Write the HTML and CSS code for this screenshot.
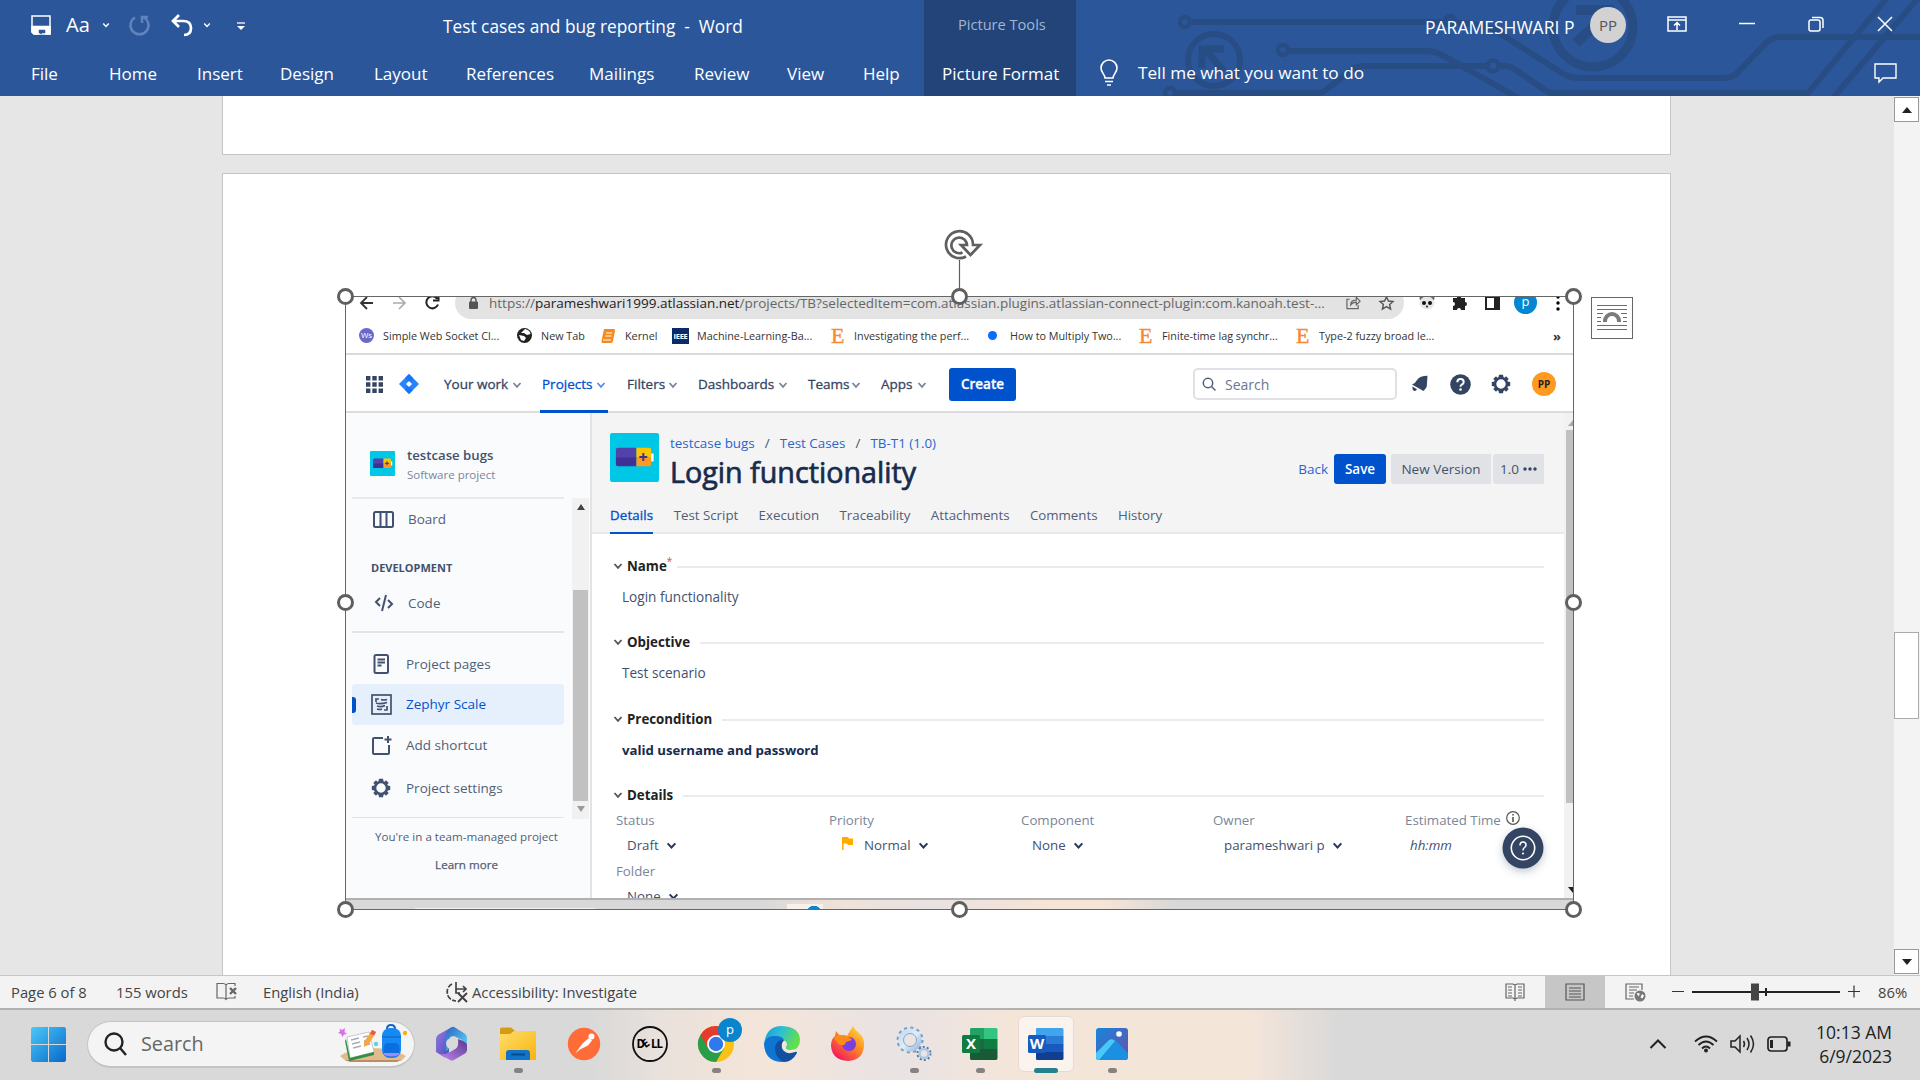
FILE: index.html
```html
<!DOCTYPE html>
<html lang="en">
<head>
<meta charset="utf-8">
<title>Test cases and bug reporting - Word</title>
<link rel="stylesheet" href="styles.css">
</head>
<body>
<svg class="defs" width="0" height="0">
  <defs>
    <linearGradient id="gWin" x1="0" y1="0" x2="1" y2="1"><stop offset="0" stop-color="#4cc8f8"/><stop offset="1" stop-color="#0669cc"/></linearGradient>
    <linearGradient id="gFold" x1="0" y1="0" x2="1" y2="1"><stop offset="0" stop-color="#ffdd6b"/><stop offset="1" stop-color="#f8b40c"/></linearGradient>
    <linearGradient id="gM1" x1="0" y1="0" x2="1" y2="1"><stop offset="0" stop-color="#8f7fe0"/><stop offset=".6" stop-color="#6a5cc8"/><stop offset="1" stop-color="#2c55b8"/></linearGradient>
    <linearGradient id="gM2" x1="0" y1="1" x2="1" y2="0"><stop offset="0" stop-color="#c08af0"/><stop offset="1" stop-color="#5b3690"/></linearGradient>
    <linearGradient id="gM3" x1="0" y1="0" x2="1" y2="1"><stop offset="0" stop-color="#2c62c4"/><stop offset="1" stop-color="#5fe0fa"/></linearGradient>
    <linearGradient id="gEdge" x1="0" y1="0" x2="1" y2=".4"><stop offset="0" stop-color="#1b96de"/><stop offset=".5" stop-color="#2fc0d0"/><stop offset="1" stop-color="#62e04c"/></linearGradient>
    <linearGradient id="gFox" x1="1" y1="0" x2=".2" y2="1"><stop offset="0" stop-color="#fff04a"/><stop offset=".45" stop-color="#ff8f20"/><stop offset="1" stop-color="#f01262"/></linearGradient>
    <linearGradient id="gPhoto" x1="0" y1="0" x2="1" y2="1"><stop offset="0" stop-color="#1685dc"/><stop offset="1" stop-color="#6b4fa8"/></linearGradient>
    <linearGradient id="gGear" x1="0" y1="0" x2="1" y2="1"><stop offset="0" stop-color="#c2ddf3"/><stop offset=".5" stop-color="#d6f0fb"/><stop offset="1" stop-color="#9dbbe0"/></linearGradient>
  </defs>
  <symbol id="chev" viewBox="0 0 10 10"><path d="M1.5 3 5 6.8 8.5 3" fill="none" stroke="currentColor" stroke-width="1.8"/></symbol>
  <symbol id="gear" viewBox="0 0 20 20"><circle cx="10" cy="10" r="6" fill="none" stroke="currentColor" stroke-width="2.6"/><path d="M8 .8h4l.6 3H7.400zM8 19.200h4l.6-3H7.400zM.8 8v4l3 .6V7.400zM19.200 8v4l-3 .6V7.400zM2.200 5 5 2.200l2 2.300L4.500 7zM17.800 5 15 2.200l-2 2.300L15.500 7zM2.200 15 5 17.800l2-2.300L4.500 13zM17.800 15 15 17.800l-2-2.300 2.500-2.500z" fill="currentColor"/></symbol>
  <symbol id="battery" viewBox="0 0 50 50"><rect width="50" height="50" rx="2" fill="#00c7e5"/><path d="M8 15h19v11H6V17q0-2 2-2z" fill="#5243aa"/><path d="M6 25h21v9H8q-2 0-2-2z" fill="#403294"/><path d="M27 15h13q2 0 2 2v8H27z" fill="#ffc400"/><path d="M27 25h15v7q0 2-2 2H27z" fill="#ff991f"/><rect x="42" y="21" width="2.500" height="8" fill="#fff"/><path d="M34 20.500v8M30 24.500h8" stroke="#403294" stroke-width="2"/></symbol>
</svg>

<header class="titlebar">
  <svg class="circuit" width="844" height="96" viewBox="1076 0 844 96" fill="none" stroke="#284d85" stroke-width="6">
    <circle cx="1185" cy="22" r="5" stroke-width="4.500"/><path d="M1191 22h252q30 0 50 7l72 46q6 3 14 3h146q8 0 14-7l28-29q6-5 14-5h163"/>
    <circle cx="1450" cy="21" r="5" stroke-width="4.500"/>
    <circle cx="1283" cy="50" r="5" stroke-width="4.500"/><path d="M1289 51h138q8 0 15 4l78 44"/>
    <circle cx="1170" cy="93" r="5" stroke-width="4.500"/><path d="M1176 93h143q4 0 8-4l26-20q4-3 10-3h124"/>
    <circle cx="1493" cy="66" r="5.500" stroke-width="4.500"/><path d="M1499 66h6q6 0 11 4l26 18q7 5 12 5h254L1887-2M1833 98 1918-2"/>
    <circle cx="1593" cy="27" r="40" stroke-width="9"/><circle cx="1214" cy="60" r="26"/>
    <path d="M1576 10h38M1610 12l-34 31" stroke-width="10"/><path d="M1202 68V49h22M1206 50l18 22" stroke-width="7"/>
  </svg>
  <div class="quick">
    <svg class="q-save" width="20" height="20" viewBox="0 0 20 20" fill="none" stroke="#fff" stroke-width="1.500"><path d="M1 1h18v18H3l-2-2z"/><path d="M1 11.500h18V19h-4v-5H7v5H3l-2-2z" fill="#fff"/><path d="M10 15v4" stroke="#2b579a"/></svg>
    <span class="q-aa">Aa</span>
    <svg class="q-c1" width="8" height="8"><use href="#chev"/></svg>
    <svg class="q-redo" width="22" height="22" viewBox="0 0 22 22" fill="none" stroke="#5f83bb" stroke-width="2.500"><path d="M6 3.500A9 9 0 1 0 15 3.500M13 9V3h6" /></svg>
    <svg class="q-undo" width="22" height="22" viewBox="0 0 22 22" fill="none" stroke="#fff" stroke-width="2.700"><path d="M2 7h10q8 0 8 7t-7 7M8 1 2 7l6 6"/></svg>
    <svg class="q-c2" width="8" height="8"><use href="#chev"/></svg>
    <svg class="q-more" width="8" height="8" viewBox="0 0 8 8"><path d="M0 1h8" stroke="#fff" stroke-width="1.300"/><path d="M0 4h8L4 8z" fill="#fff"/></svg>
  </div>
  <div class="doc-title">Test cases and bug reporting&nbsp; -&nbsp; Word</div>
  <div class="context"><span class="ctx-a">Picture Tools</span><span class="ctx-b">Picture Format</span></div>
  <div class="account"><span class="acc-name">PARAMESHWARI P</span><span class="acc-pic">PP</span>
    <svg width="20" height="16" viewBox="0 0 20 16" fill="none" stroke="#fff" stroke-width="1.500"><path d="M1 1h18v14H1zM1 4h18M10 14V6.500M7 9.500l3-3 3 3"/></svg>
    <svg class="w-min" width="16" height="18"><path d="M0 8.500h16" stroke="#fff" stroke-width="1.500"/></svg>
    <svg class="w-max" width="16" height="16" viewBox="0 0 16 16" fill="none" stroke="#fff" stroke-width="1.500"><rect x="1" y="4" width="11" height="11" rx="2"/><path d="M4 1.500h8q3 0 3 3V12"/></svg>
    <svg class="w-close" width="16" height="16" viewBox="0 0 16 16" stroke="#fff" stroke-width="1.500"><path d="m1 1 14 14M15 1 1 15"/></svg>
  </div>
  <nav class="tabs"><span>File</span><span>Home</span><span>Insert</span><span>Design</span><span>Layout</span><span>References</span><span>Mailings</span><span>Review</span><span>View</span><span>Help</span></nav>
  <div class="tell">
    <svg width="18" height="26" viewBox="0 0 18 26" fill="none" stroke="#fff" stroke-width="1.600"><path d="M5 18c0-4-4-5-4-10a8 8 0 0 1 16 0c0 5-4 6-4 10zM5 21.500h8M7 25h4"/></svg>
    <span>Tell me what you want to do</span>
    <svg class="comment" width="23" height="20" viewBox="0 0 23 20" fill="none" stroke="#fff" stroke-width="1.400"><path d="M1 1h21v14H9l-4 4v-4H1z"/></svg>
  </div>
</header>

<main class="workspace">
  <div class="canvas">
    <div class="page page-prev"></div>
    <div class="page page-cur">
      <div class="picture">
        <div class="shot">
          <div class="browser">
            <svg class="b-back" width="15" height="14" viewBox="0 0 15 14" fill="none" stroke="#333" stroke-width="1.800"><path d="M14 7H2M8 1 2 7l6 6"/></svg>
            <svg class="b-fwd" width="15" height="14" viewBox="0 0 15 14" fill="none" stroke="#aaa" stroke-width="1.600"><path d="M1 7h12M7 1l6 6-6 6"/></svg>
            <svg class="b-rel" width="15" height="15" viewBox="0 0 15 15" fill="none" stroke="#222" stroke-width="2"><path d="M13 9.500A6 6 0 1 1 12 3.500M13.500 0v5.500H8"/></svg>
            <div class="omni">
              <svg width="9" height="12" viewBox="0 0 9 12"><rect y="4.500" width="9" height="7.500" rx="1" fill="#555"/><path d="M2 5V3a2.500 2.500 0 0 1 5 0v2" fill="none" stroke="#555" stroke-width="1.400"/></svg>
              <span class="url">https://<b>parameshwari1999.atlassian.net</b>/projects/TB?selectedItem=com.atlassian.plugins.atlassian-connect-plugin:com.kanoah.test-...</span>
              <svg class="o-share" width="15" height="14" viewBox="0 0 16 14" fill="none" stroke="#666" stroke-width="1.300"><path d="M4 3H1v10h12V9M5 9q0-5 6-5V1l4 4-4 4V6Q7 6 5 9z"/></svg>
              <svg class="o-star" width="15" height="14" viewBox="0 0 15 14" fill="none" stroke="#555" stroke-width="1.400"><path d="m7.500 1 2 4 4.500.5-3.400 3 1 4.500-4.100-2.400L3.400 13l1-4.500L1 5.500 5.500 5z"/></svg>
            </div>
            <svg class="b-panda" width="16" height="15" viewBox="0 0 16 15"><circle cx="3" cy="3" r="2.500" fill="#666"/><circle cx="13" cy="3" r="2.500" fill="#666"/><ellipse cx="8" cy="8" rx="7.500" ry="6.500" fill="#e6e6e6"/><circle cx="5" cy="8" r="2" fill="#111"/><circle cx="11" cy="8" r="2" fill="#111"/><circle cx="8" cy="11.500" r="1" fill="#111"/></svg>
            <svg class="b-puz" width="15" height="15" viewBox="0 0 15 15"><path d="M1 3h4a2 2 0 1 1 4 0h4v4a2 2 0 1 1 0 4v4H9a2 2 0 0 0-4 0H1v-4a2 2 0 0 0 0-4z" fill="#222"/></svg>
            <svg class="b-side" width="15" height="14" viewBox="0 0 15 14"><path d="M1 1h13v12H1z" fill="none" stroke="#222" stroke-width="2"/><path d="M9 1h5v12H9z" fill="#222"/></svg>
            <span class="b-p">p</span>
            <svg class="b-dots" width="4" height="16"><circle cx="2" cy="2" r="1.700"/><circle cx="2" cy="8" r="1.700"/><circle cx="2" cy="14" r="1.700"/></svg>
          </div>
          <div class="marks">
            <i class="mk mk-ws">Ws</i><span>Simple Web Socket Cl...</span>
            <svg width="15" height="15" viewBox="0 0 15 15"><circle cx="7.500" cy="7.500" r="7.500" fill="#222"/><path d="M8 1q5 1 5.500 5L10 7 7 5 4 5zM2 7l5 1 2 2-2 3-3-1z" fill="#fff"/></svg><span>New Tab</span>
            <svg width="15" height="14" viewBox="0 0 15 14"><path d="M3 0h10q1.500 0 1 1.500L12 12q-.5 2-2 2H1.500Q0 14 .5 12z" fill="#f58a1f"/><path d="M5 4h6M4.500 7h6M2 11h8" stroke="#fff"/></svg><span>Kernel</span>
            <i class="mk mk-ieee">IEEE</i><span>Machine-Learning-Ba...</span>
            <i class="mk mk-e">E</i><span>Investigating the perf...</span>
            <i class="mk mk-dot"></i><span>How to Multiply Two...</span>
            <i class="mk mk-e">E</i><span>Finite-time lag synchr...</span>
            <i class="mk mk-e">E</i><span>Type-2 fuzzy broad le...</span>
            <b>»</b>
          </div>
          <div class="jnav">
            <svg class="j-apps" width="17" height="17" viewBox="0 0 17 17" fill="#344563"><path d="M0 0h4.400v4.400H0zM6.300 0h4.400v4.400H6.300zM12.600 0H17v4.400h-4.400zM0 6.300h4.400v4.400H0zM6.300 6.300h4.400v4.400H6.300zM12.600 6.300H17v4.400h-4.400zM0 12.600h4.400V17H0zM6.300 12.600h4.400V17H6.300zM12.600 12.600H17V17h-4.400z"/></svg>
            <svg class="j-logo" width="20" height="20" viewBox="0 0 20 20"><path d="M10 0 20 10 10 20 0 10z" fill="#2684ff"/><path d="m10 0 4 4q0 4-4 4L6 4zM10 20l-4-4q0-4 4-4l4 4z" fill="#1a75f5"/><path d="m10 7 3 3-3 3-3-3z" fill="#fff"/></svg>
            <div class="j-item w-your">Your work<svg width="10" height="10"><use href="#chev"/></svg></div>
            <div class="j-item w-proj">Projects<svg width="10" height="10"><use href="#chev"/></svg></div>
            <div class="j-item w-filt">Filters<svg width="10" height="10"><use href="#chev"/></svg></div>
            <div class="j-item w-dash">Dashboards<svg width="10" height="10"><use href="#chev"/></svg></div>
            <div class="j-item w-team">Teams<svg width="10" height="10"><use href="#chev"/></svg></div>
            <div class="j-item w-apps">Apps<svg width="10" height="10"><use href="#chev"/></svg></div>
            <div class="j-create">Create</div>
            <div class="j-search"><svg width="14" height="14" viewBox="0 0 14 14" fill="none" stroke="#505f79" stroke-width="1.500"><circle cx="6" cy="6" r="4.700"/><path d="m9.500 9.500 4 4"/></svg>Search</div>
            <svg class="j-bell" width="19" height="18" viewBox="0 0 19 18" fill="#344563"><path d="M17.500.8 16.800 11q-.3 1.800-1.600 3L13.500 16 2 9.500q3.500-1.200 5-4.500 3-4.200 10.500-4.200zM2.500 11.500 7 14.300q-1 2.200-3 1.500T2.500 11.500z"/></svg>
            <svg class="j-help" width="21" height="21" viewBox="0 0 21 21"><circle cx="10.500" cy="10.500" r="10.300" fill="#344563"/><path d="M7.300 8.300q0-3.300 3.200-3.300t3.200 3q0 1.600-1.800 2.500-1.400.8-1.400 2.300" fill="none" stroke="#fff" stroke-width="2"/><circle cx="10.500" cy="15.500" r="1.300" fill="#fff"/></svg>
            <svg class="j-gear" width="20" height="20"><use href="#gear"/></svg>
            <span class="j-pp">PP</span>
          </div>
          <div class="jbody">
            <aside class="side">
              <div class="side-main">
                <div class="proj"><svg width="25" height="25"><use href="#battery"/></svg><div><strong>testcase bugs</strong><small>Software project</small></div></div>
                <div class="s-item s-board"><svg width="21" height="17" viewBox="0 0 21 17" fill="none" stroke="#42526e" stroke-width="2"><rect x="1" y="1" width="19" height="15" rx="1.500"/><path d="M7.500 1v15M13.500 1v15"/></svg>Board</div>
                <div class="s-head">DEVELOPMENT</div>
                <div class="s-item s-code"><svg width="20" height="16" viewBox="0 0 20 16" fill="none" stroke="#42526e" stroke-width="2"><path d="M6 3 2 7l4 4M14 5l4 4-4 4M12 0 8 16"/></svg>Code</div>
                <div class="s-item s-pages"><svg width="20" height="20" viewBox="0 0 20 20" fill="none" stroke="#42526e" stroke-width="2"><rect x="3.500" y="1" width="13.500" height="18" rx="1.500"/><path d="M6.500 5.500H14M6.500 8.500H14M6.500 11.500h4"/></svg>Project pages</div>
                <div class="s-item s-zephyr"><svg width="21" height="21" viewBox="0 0 21 21" fill="none" stroke="#42526e" stroke-width="1.700"><rect x="1" y="1" width="19" height="19"/><path d="M5 8V5h3M10 5.500q3 1 6 0M5 9q4 1.500 11-.5M6 12q4 1.500 8-.5M6 15q3 1 5 0M16 12v4h-3"/></svg>Zephyr Scale</div>
                <div class="s-item s-add"><svg width="20" height="19" viewBox="0 0 20 19" fill="none" stroke="#42526e" stroke-width="2"><path d="M12 2H3q-1 0-1 1v14q0 1 1 1h14q1 0 1-1V9M17 0v7M13.500 3.500h7"/></svg>Add shortcut</div>
                <div class="s-item s-set"><svg width="20" height="20"><use href="#gear"/></svg>Project settings</div>
                <div class="s-foot">You're in a team-managed project<b>Learn more</b></div>
              </div>
              <div class="side-scroll"><i class="tri up"></i><div class="thumb"></div><i class="tri down"></i></div>
            </aside>
            <section class="content">
              <div class="c-head">
                <svg width="49" height="49"><use href="#battery"/></svg>
                <div class="c-title">
                  <div class="crumbs"><a>testcase bugs</a><i>/</i><a>Test Cases</a><i>/</i><a>TB-T1 (1.0)</a></div>
                  <h1>Login functionality</h1>
                </div>
                <div class="actions"><a>Back</a><span class="save">Save</span><span class="newv">New Version</span><span class="ver">1.0 <svg width="14" height="4" viewBox="0 0 14 4" fill="#344563"><circle cx="2" cy="2" r="1.700"/><circle cx="7" cy="2" r="1.700"/><circle cx="12" cy="2" r="1.700"/></svg></span></div>
                <div class="c-tabs"><span class="on">Details</span><span>Test Script</span><span>Execution</span><span>Traceability</span><span>Attachments</span><span>Comments</span><span>History</span></div>
              </div>
              <div class="form">
                <div class="sec sec-name"><svg width="10" height="10"><use href="#chev"/></svg>Name<sup>*</sup><hr></div><p>Login functionality</p>
                <div class="sec"><svg width="10" height="10"><use href="#chev"/></svg>Objective<hr></div><p>Test scenario</p>
                <div class="sec"><svg width="10" height="10"><use href="#chev"/></svg>Precondition<hr></div><p class="strong">valid username and password</p>
                <div class="sec"><svg width="10" height="10"><use href="#chev"/></svg>Details<hr></div>
                <div class="fields">
                  <div><label>Status</label><div class="val">Draft<svg width="11" height="11"><use href="#chev"/></svg></div></div>
                  <div><label>Priority</label><div class="val val-p"><svg class="flag" width="11" height="13" viewBox="0 0 11 13"><path d="M0 0h6l1 1.500h4V8H6L5 6.500H1.500V13H0z" fill="#ffab00"/></svg><span>Normal</span><svg width="11" height="11"><use href="#chev"/></svg></div></div>
                  <div><label>Component</label><div class="val">None<svg width="11" height="11"><use href="#chev"/></svg></div></div>
                  <div><label>Owner</label><div class="val">parameshwari p<svg width="11" height="11"><use href="#chev"/></svg></div></div>
                  <div class="est"><label>Estimated Time<svg width="14" height="14" viewBox="0 0 14 14" fill="none" stroke="#555" stroke-width="1.200"><circle cx="7" cy="7" r="6.300"/><path d="M7 6v5M7 3v1.600" stroke-width="1.600"/></svg></label><div class="val hh">hh:mm</div></div>
                  <div><label>Folder</label><div class="val">None<svg width="11" height="11"><use href="#chev"/></svg></div></div>
                </div>
              </div>
              <svg class="fab" width="60" height="60" viewBox="0 0 60 60"><circle cx="30" cy="30" r="20.500" fill="#344563"/><circle cx="30" cy="30" r="11.700" fill="none" stroke="#fff" stroke-width="1.600"/><path d="M27 27.500q0-3.500 3-3.500t3 3q0 1.500-1.500 2.500T30 32.500" fill="none" stroke="#fff" stroke-width="1.500"/><circle cx="30" cy="35.500" r="1.100" fill="#fff"/></svg>
            </section>
            <div class="main-scroll"><i class="tri up"></i><div class="thumb"></div><i class="tri down"></i></div>
          </div>
          <div class="strip"><i class="strip-pill"></i><i class="strip-tile"></i></div>
        </div>
        <svg class="selection" width="1262" height="716" viewBox="-17 -86 1262 716" fill="none" stroke="#5f5f5f">
          <path d="M614.500-36V0" stroke-width="1.200"/>
          <g fill="#fff" stroke-width="3"><circle cx=".5" cy=".5" r="7"/><circle cx="614.500" cy=".5" r="7"/><circle cx="1228.500" cy=".5" r="7"/><circle cx=".5" cy="306.500" r="7"/><circle cx="1228.500" cy="306.500" r="7"/><circle cx=".5" cy="613.500" r="7"/><circle cx="614.500" cy="613.500" r="7"/><circle cx="1228.500" cy="613.500" r="7"/></g>
          <path d="M621-39.500A13.500 13.500 0 1 1 628-51h7L625.500-41 616-51h6A7.800 7.800 0 1 0 617.500-43.500" stroke-width="2.700"/>
        </svg>
        <svg class="layout-opt" width="42" height="42" viewBox="0 0 42 42" fill="none"><rect x=".5" y=".5" width="41" height="41" fill="#fff" stroke="#666"/><path d="M6 8.500h30M6 12.500h30M6 16.500h6M30 16.500h6M6 20.500h4M32 20.500h4M6 24.500h4M32 24.500h4M6 28.500h30M6 32.500h30" stroke="#3b78b5" stroke-width="1.200"/><path d="M14 25v-1a7 7 0 0 1 14 0v1" stroke="#7b7b7b" stroke-width="4"/></svg>
      </div>
    </div>
  </div>
  <div class="vscroll"><span class="vs-btn"><i class="tri up"></i></span><span class="vs-thumb"></span><span class="vs-btn vs-down"><i class="tri down"></i></span></div>
</main>

<footer class="status">
  <span class="st-page">Page 6 of 8</span><span class="st-words">155 words</span>
  <svg class="st-book" width="22" height="20" viewBox="0 0 22 20" fill="none" stroke="#666" stroke-width="1.200"><path d="M10 3v14M10 3Q9 1.500 7 1.500H1V16h6q2 0 3 1.500 1-1.500 3-1.500h6v-2M10 3q1-1.500 3-1.500h6V4"/><path d="m14 6 6 6M20 6l-6 6" stroke-width="2.400"/></svg>
  <span class="st-lang">English (India)</span>
  <svg class="st-accicon" width="22" height="22" viewBox="0 0 22 22" fill="none" stroke="#444" stroke-width="1.700"><path d="M9 1v11h4M9 8h10M16 5l3 3-3 3"/><path d="M5 3a9 9 0 0 0 4 17" stroke-dasharray="5 1.500"/><path d="m11 12 9 9M20 12l-9 9" stroke-width="2"/></svg>
  <span class="st-acc">Accessibility: Investigate</span>
  <div class="views">
    <svg width="20" height="18" viewBox="0 0 20 18" fill="none" stroke="#666" stroke-width="1.200"><path d="M1 1h7l2 1 2-1h7v14h-7l-2 1-2-1H1zM10 2v16M3 4h4M3 7h4M3 10h4M3 13h4M13 4h4M13 7h4M13 10h4M13 13h4"/></svg>
    <span class="view-on"><svg width="20" height="18" viewBox="0 0 20 18" fill="none" stroke="#555" stroke-width="1.200"><path d="M1 1h18v16H1zM4 5h12M4 8h12M4 11h12M4 14h12"/></svg></span>
    <svg width="21" height="19" viewBox="0 0 21 19" fill="none" stroke="#666" stroke-width="1.200"><path d="M9 16H1V1h16v6M4 4h10M4 7h8M4 10h5M4 13h4"/><circle cx="15" cy="13" r="5.500" fill="#777" stroke="none"/><path d="m11.500 10 3.500.5-1.500 3zM17 11l2 1.500-1.500 3-2-1z" fill="#fff" stroke="none"/></svg>
  </div>
  <svg class="zoom" width="190" height="20" viewBox="0 0 190 20"><path d="M2 9.500h12M178 9.500h12M184 3.500v12" stroke="#333" stroke-width="1.200"/><path d="M22 10h148" stroke="#222" stroke-width="2"/><path d="M96 6v8" stroke="#222" stroke-width="2"/><path d="M81 1.500h8v17h-8z" fill="#444"/></svg>
  <span class="st-pct">86%</span>
</footer>

<footer class="taskbar">
  <svg class="t-start" width="35" height="35" viewBox="0 0 35 35" fill="url(#gWin)"><path d="M1.500 0H17v17H0V1.500zM18 0h15.500L35 1.500V17H18zM0 18h17v17H1.500L0 33.500zM18 18h17v15.500L33.500 35H18z"/></svg>
  <div class="t-search">
    <svg width="24" height="24" viewBox="0 0 24 24" fill="none" stroke="#222" stroke-width="2.400"><circle cx="11" cy="10" r="8.500"/><path d="m17 16 6 7"/></svg><span>Search</span>
    <svg class="t-art" width="70" height="38" viewBox="0 0 70 38"><path d="M2 31q12-8 32-8t34 8l-5 5H8z" fill="#e2bb8a"/><path d="M7 35h56l-4 2H12z" fill="#b98e65"/><path d="m9 12 22-5 5 20-24 6z" fill="#fff" stroke="#bbb" stroke-width=".8"/><path d="M8 14l4 19 24-6v3l-25 6L7 16z" fill="#2f8f42"/><path d="m13 15 8-2M14 19l8-2M15 23l8-2M25 12l5-1M26 16l5-1M27 20l5-1" stroke="#aab" stroke-width="1.300"/><path d="m34 5 4 2-7 12-5 3v-5z" fill="#f7a83c"/><path d="m34 5 4 2-2 3.500-4-2z" fill="#ef5350"/><path d="M1.500 3.500 4 5l3-2-.5 4L9 9 6 9.500 4.500 12 3 9 0 8l2-1.500z" fill="#de6cf0"/><circle cx="67" cy="8" r="2.200" fill="#ffab1a"/><circle cx="38" cy="19" r="2.200" fill="#5bd0e6"/><path d="M49 4q0-4 4-4t4 4" fill="none" stroke="#1565c0" stroke-width="2"/><rect x="44" y="3" width="19" height="30" rx="8" fill="#1689f5"/><path d="M44 12h19" stroke="#0d5fc0"/><rect x="45.500" y="18" width="16" height="14" rx="5" fill="#0b6ee0"/><path d="M46 28h15v2q-7 3-15 0z" fill="#9a8cff"/></svg>
  </div>
  <svg class="t-icon" viewBox="0 0 36 36"><path d="M18 1 4.500 8.500Q2 10 2 13v13l9 5.500 4-5.500V5z" fill="url(#gM1)"/><path d="M18 1q-6 3-6 9v15l4-3V11l4-1 8 4 5 8V12q0-3-2.500-4.500L21 1.500Q19.500.5 18 1z" fill="url(#gM3)"/><path d="M33 19v5q0 2-2 3.500L20 34q-2 1-4 0L5 28q6 1 12-2.500l5-3q3-2 2-9.500 9 3 9 6z" fill="url(#gM2)"/><circle cx="17.700" cy="17.500" r="5.600" fill="#dadada"/></svg>
  <svg class="t-icon" viewBox="0 0 36 36"><path d="M0 3.500Q0 1.500 2 1.500h9l4 3.500-5 4H0z" fill="#d79b10"/><path d="M0 8h10l4-3h20q2 0 2 2v27H0z" fill="url(#gFold)"/><path d="M6 34v-7q0-3 3-3h18q3 0 3 3v7z" fill="#1274c8"/><path d="M11 28.500h14" stroke="#084b8b" stroke-width="2"/></svg>
  <svg class="t-icon" viewBox="0 0 36 36"><circle cx="18" cy="18" r="16.200" fill="#ff6c37"/><path d="M9 27.500 17 17l6-5 3 2.500-4 5-8 4z" fill="#fff"/><circle cx="25.500" cy="10.500" r="3" fill="#fff"/></svg>
  <svg class="t-icon" viewBox="0 0 36 36"><circle cx="18" cy="18" r="17" fill="none" stroke="#111" stroke-width="1.800"/><g class="dell"><text x="4.500" y="22">D</text><text x="0" y="0" transform="translate(13.500 22.500) rotate(-38)">E</text><text x="19" y="22">L</text><text x="24.500" y="22">L</text></g></svg>
  <div class="t-icon"><svg viewBox="0 0 36 36"><circle cx="18" cy="18" r="18" fill="#fbc116"/><path d="M18 18 2.400 9A18 18 0 0 0 18 36l8-13.500z" fill="#2a9d48"/><path d="M2.400 9A18 18 0 0 1 33.600 9H18v9L10 22z" fill="#e33b2e"/><circle cx="18" cy="18" r="9" fill="#fff"/><circle cx="18" cy="18" r="7.200" fill="#3078ee"/></svg><span class="badge">p</span></div>
  <svg class="t-icon" viewBox="0 0 36 36"><path d="M0 20Q1 0 18 0q18 1 18 14 0 10-10 10-5 0-4-3 3-5-3-7Q6 10 0 20z" fill="url(#gEdge)"/><path d="M0 18Q2 9 12 10q6 0 8 4-8 1-6 9 3 8 12 9-4 4-9 4Q1 35 0 18z" fill="#0f74d4"/><path d="M20 14q-8-1-9 8 0 10 9 14 8 0 13-9 0-2-2-1-8 3-12-2-3-5 1-10z" fill="#114f9f"/></svg>
  <svg class="t-icon" viewBox="0 0 36 36"><path d="m23 0q2 4 6 7 6 5 5 13-1 14-16 15Q2 34 1 20q0-7 4-10l1-5 4 5q4-2 7 0 3-5 6-10z" fill="url(#gFox)"/><circle cx="19" cy="18" r="7" fill="#7b3ee0"/><path d="M4 12q3-4 7-3l7 2q3 1 4 3l-6 2q-1 4-5 3-5-2-7-7z" fill="#ff8a1c"/></svg>
  <svg class="t-icon" viewBox="0 0 36 36"><circle cx="14" cy="14" r="12" fill="none" stroke="#7b9dc4" stroke-width="3" stroke-dasharray="3 3.280"/><circle cx="14" cy="14" r="9" fill="none" stroke="url(#gGear)" stroke-width="5"/><circle cx="14" cy="14" r="6.500" fill="none" stroke="#8ea3bb" stroke-width="1"/><circle cx="28" cy="27.500" r="6.500" fill="none" stroke="#58779b" stroke-width="2" stroke-dasharray="2 2.080"/><circle cx="28" cy="27.500" r="4.500" fill="none" stroke="#aac8e8" stroke-width="2.600"/></svg>
  <svg class="t-icon" viewBox="0 0 36 36"><path d="M9 2h13v11H8V4q0-2 1-2z" fill="#21a366"/><path d="M22 2h12q1.500 0 1.500 1.500V13H22z" fill="#33c481"/><path d="M8 13h14v11H8z" fill="#1a6c40"/><path d="M22 13h13.500v10H22z" fill="#107c41"/><path d="M8 23h27.500v9q0 2-1.500 2H9q-1 0-1-2z" fill="#185c37"/><rect y="9" width="18" height="18" rx="1.500" fill="#107c41"/><text x="9" y="23" class="app">X</text></svg>
  <div class="t-icon t-active"><svg viewBox="0 0 36 36"><path d="M9 2h25q1.500 0 1.500 1.500V10H8V3q0-1 1-1z" fill="#41a5ee"/><path d="M8 10h27.500v8H8z" fill="#2b7cd3"/><path d="M8 18h27.500v8H8z" fill="#185abd"/><path d="M8 26h27.500v6.500Q35.500 34 34 34H9q-1 0-1-1.500z" fill="#103f91"/><rect y="9" width="18" height="18" rx="1.500" fill="#185abd"/><text x="9" y="23" class="app">W</text></svg></div>
  <svg class="t-icon" viewBox="0 0 36 36"><rect x="2" y="2" width="32" height="32" rx="3" fill="url(#gPhoto)"/><path d="M2 27 15 14q3-2 6 0l13 13v4q0 3-3 3H5q-3 0-3-3z" fill="#1b8fe0"/><path d="M2 27 15 14q3-2 6 1L5 34q-3 0-3-3z" fill="#48c8f8"/><circle cx="25" cy="8" r="2.800" fill="#fff"/></svg>
  <div class="tray">
    <svg class="tr-up" width="18" height="10" viewBox="0 0 18 10" fill="none" stroke="#222" stroke-width="2"><path d="m1.500 9 7.500-7.500L16.500 9"/></svg>
    <svg class="tr-wifi" width="24" height="18" viewBox="0 0 24 18" fill="none" stroke="#222" stroke-width="1.800"><path d="M1 6.500q11-10 22 0M4.500 10q7.500-7 15 0M8 13.500q4-4 8 0"/><circle cx="12" cy="15.500" r="2" fill="#222" stroke="none"/></svg>
    <svg class="tr-vol" width="25" height="20" viewBox="0 0 25 20" fill="none" stroke="#222" stroke-width="1.500"><path d="M1 7h4l5-5v16l-5-5H1zM13.500 7q2 3 0 6M17 4q4 6 0 12M20.500 1.500q6 8.500 0 17"/></svg>
    <svg class="tr-bat" width="24" height="16" viewBox="0 0 24 16" fill="none" stroke="#222" stroke-width="1.700"><rect x="1" y="1" width="19" height="14" rx="3"/><path d="M4.500 4v8" stroke-width="3"/><path d="M22 5.500v5" stroke-width="3"/></svg>
    <div class="clock">10:13 AM<br>6/9/2023</div>
  </div>
  <div class="dots"><i></i><i></i><i></i><i></i><i class="wide"></i><i></i></div>
</footer>
</body>
</html>
```
FILE: styles.css
```css
* { box-sizing: border-box; }
body { margin: 0; width: 1920px; height: 1080px; overflow: hidden; display: flex; flex-direction: column; font-family: "Open Sans", "Noto Sans", sans-serif; color: #333; white-space: nowrap; }
svg { display: block; flex: none; overflow: visible; }
i { font-style: normal; }
.defs { position: absolute; }
.tri { display: block; width: 0; height: 0; border: 5px solid transparent; }
.tri.up { border-top: 0; border-bottom: 6px solid #222; }
.tri.down { border-bottom: 0; border-top: 6px solid #222; }

/* Title bar and ribbon */
.titlebar { position: relative; height: 96px; flex: none; background: #2b579a; color: #fff; display: grid; grid-template: 51px 45px / 443px 481px 152px 844px; font-size: 17px; }
.circuit { position: absolute; right: 0; top: 0; overflow: hidden; }
.quick { display: flex; align-items: center; padding: 0 0 2px 31px; }
.q-aa { font-size: 20px; margin-left: 15px; width: 28px; }
.q-c1 { margin-left: 8px; }
.q-redo { margin-left: 19px; }
.q-undo { margin-left: 20px; }
.q-c2 { margin-left: 10px; }
.q-more { margin-left: 26px; margin-top: 2px; }
.doc-title { line-height: 53px; font-size: 17.300px; }
.context { grid-area: 1 / 3 / 3 / 4; background: #224479; display: flex; flex-direction: column; }
.ctx-a { height: 51px; line-height: 49px; padding-left: 34px; font-size: 14.600px; color: #a3b5d3; }
.ctx-b { line-height: 45px; padding-left: 18px; }
.account { position: relative; display: flex; align-items: center; padding-left: 349px; height: 48px; }
.acc-name { width: 154px; padding-top: 5px; font-size: 17.500px; }
.acc-pic { width: 36px; height: 36px; margin: 2px 41px 0 11px; border-radius: 50%; background: #d2d2d2; color: #555; font-size: 15px; text-align: center; line-height: 36px; }
.w-min { margin-left: 52px; }
.w-max { margin-left: 53px; }
.w-close { margin-left: 53px; }
.tabs { grid-area: 2 / 1 / 3 / 3; display: grid; grid-template-columns: 78px 88px 83px 94px 92px 123px 105px 93px 76px 60px; padding-left: 31px; line-height: 45px; }
.tell { grid-area: 2 / 4; position: relative; display: flex; align-items: center; padding: 0 23px 2px 24px; font-size: 17.200px; }
.tell span { margin-left: 20px; }
.comment { margin-left: auto; }

/* Document area */
.workspace { height: 879px; flex: none; display: flex; background: #e6e6e6; }
.canvas { width: 1894px; overflow: hidden; }
.page { width: 1449px; margin-left: 222px; background: #fff; border: 1px solid #c6c6c6; }
.page-prev { height: 59px; border-top: 0; margin-bottom: 18px; }
.page-cur { height: 830px; padding: 122px 0 0 122px; }
.vscroll { width: 26px; background: #f3f3f3; display: flex; flex-direction: column; padding: 1px 1px 1px 0; }
.vs-btn { height: 25px; background: #fff; border: 1px solid #999; display: flex; align-items: center; justify-content: center; }
.vs-thumb { height: 87px; margin-top: 510px; background: #fff; border: 1px solid #aaa; }
.vs-down { margin-top: auto; }
.picture { position: relative; width: 1229px; height: 614px; }
.shot { width: 1229px; height: 614px; border: 1px solid #666; overflow: hidden; background: #fff; }
.selection { position: absolute; left: -17px; top: -86px; }
.layout-opt { position: absolute; left: 1246px; top: 1px; }

/* Browser chrome in the picture */
.browser { height: 22px; display: flex; align-items: center; padding: 0 0 11px 13px; }
.b-fwd { margin-left: 18px; }
.b-rel { margin-left: 18px; }
.omni { width: 949px; height: 32px; margin-left: 15px; border-radius: 16px; background: #e3e3e3; display: flex; align-items: center; padding-left: 14px; }
.url { width: 868px; padding-left: 11px; font-size: 13.500px; color: #666; }
.url b { font-weight: 400; color: #222; }
.o-star { margin-left: 18px; }
.b-panda { margin-left: 15px; }
.b-puz { margin-left: 17px; }
.b-side { margin-left: 18px; }
.b-p { width: 23px; height: 23px; margin: 0 19px 0 14px; border-radius: 50%; background: #0288d1; color: #fff; font-size: 13px; line-height: 20px; text-align: center; }
.marks { height: 36px; display: grid; grid-template-columns: 24px 134px 24px 60px 24px 47px 25px 134px 23px 134px 22px 129px 23px 134px 23px 234px 20px; align-items: center; padding: 0 0 1px 13px; font-size: 10.800px; color: #333; border-bottom: 2px solid #d9d9d9; }
.mk { display: block; }
.mk-ws { width: 15px; height: 15px; border-radius: 50%; background: #6a68c8; color: #fff; font-size: 8px; text-align: center; line-height: 14px; }
.mk-ieee { width: 17px; height: 16px; background: #0d2a66; color: #fff; font: 700 7.500px/16px "Open Sans", sans-serif; letter-spacing: -.3px; text-align: center; }
.mk-e { font: 22px/18px "Liberation Serif", serif; color: #f58a33; -webkit-text-stroke: .4px #f58a33; }
.mk-dot { width: 9px; height: 9px; border-radius: 50%; background: #0a6cff; }
.marks b { font-size: 13px; }

/* Jira navigation */
.jnav { height: 58px; display: flex; align-items: center; padding: 2px 0 0 20px; border-bottom: 2px solid #dcdcde; font-size: 13.500px; color: #344563; -webkit-text-stroke: .3px; }
.j-logo { margin: 0 25px 0 16px; }
.j-item { display: flex; align-items: center; justify-content: space-between; height: 100%; margin-right: 20px; }
.j-item svg { color: #7a869a; margin-top: 1px; }
.w-your { width: 78px; }
.w-proj { width: 68px; padding: 1px 2px 0 2px; margin-left: -2px; margin-right: 19px; border-bottom: 3px solid #0052cc; color: #0052cc; height: 56px; margin-top: 2px; }
.w-proj svg { color: #5b8fe0; }
.w-filt { width: 51px; }
.w-dash { width: 90px; }
.w-team { width: 53px; }
.w-apps { width: 46px; }
.j-create, .save { background: #0052cc; color: #fff; border-radius: 3px; text-align: center; font-weight: 600; }
.j-create { width: 67px; height: 33px; line-height: 33px; margin-left: 2px; }
.j-search { width: 204px; height: 32px; margin-left: 177px; border: 2px solid #dfe1e6; border-radius: 5px; display: flex; align-items: center; gap: 9px; padding-left: 7px; color: #6b778c; font-size: 14px; -webkit-text-stroke: 0; }
.j-bell { margin-left: 13px; }
.j-help { margin-left: 21px; }
.j-gear { margin-left: 20px; }
.j-pp { width: 24px; height: 24px; margin-left: 21px; border-radius: 50%; background: #ff991f; color: #222; font: 700 10px/24px "Open Sans", sans-serif; text-align: center; -webkit-text-stroke: 0; }
.jbody { height: 485px; display: flex; }

/* Project sidebar */
.side { width: 246px; background: #fafbfc; border-right: 2px solid #e2e3e6; display: flex; color: #505f79; font-size: 13.500px; }
.side-main { width: 226px; padding: 0 8px 0 6px; }
.proj { height: 86px; border-bottom: 2px solid #e8e9ec; display: flex; gap: 12px; padding: 38px 0 0 18px; }
.proj div { display: flex; flex-direction: column; margin-top: -5px; line-height: 18px; }
.proj strong { font-size: 13.200px; font-weight: 600; color: #42526e; }
.proj small { font-size: 11.500px; line-height: 21px; color: #7a869a; }
.s-item { display: flex; align-items: center; height: 42px; padding-left: 19px; gap: 15px; }
.s-item svg { color: #42526e; }
.s-board { padding-left: 21px; gap: 14px; height: 40px; }
.s-head { font-size: 11px; font-weight: 700; padding-left: 19px; line-height: 16px; margin-top: 21px; color: #42526e; }
.s-code { height: 57px; border-bottom: 2px solid #e3e4e8; padding: 0 0 2px 22px; gap: 14px; margin-bottom: 10px; }
.s-pages { height: 41px; }
.s-zephyr { background: #e6effc; border-radius: 4px; color: #0052cc; position: relative; height: 41px; padding-bottom: 1px; gap: 14px; }
.s-zephyr::before { content: ""; position: absolute; left: 0; top: 13px; width: 4px; height: 16px; border-radius: 0 3px 3px 0; background: #0052cc; }
.s-add { height: 40px; }
.s-set { height: 48px; padding-bottom: 2px; }
.s-foot { border-top: 1px solid #e3e4e8; margin-top: 4px; padding: 8px 0 0 17px; text-align: center; font-size: 11.600px; line-height: 22px; }
.s-foot b { display: block; font-weight: 400; line-height: 22px; margin-top: 6px; -webkit-text-stroke: .25px; }
.side-scroll { width: 17px; height: 321px; margin-top: 85px; background: #f1f1f1; display: flex; flex-direction: column; align-items: center; padding: 6px 0; }
.side-scroll .thumb { width: 15px; height: 211px; margin: 80px 0 5px; background: #c1c1c1; }
.side-scroll .tri { border-width: 4px; }
.side-scroll .tri.up { border-top: 0; border-bottom: 6px solid #444; }
.side-scroll .tri.down { border-bottom: 0; border-top: 6px solid #999; }

/* Test case */
.content { position: relative; width: 972px; }
.c-head { height: 121px; background: #f4f4f4; border-bottom: 2px solid #e9e9ee; display: grid; grid-template: 85px 34px / 60px 600px 1fr; padding-left: 18px; }
.c-head > svg { margin-top: 20px; }
.crumbs { display: flex; margin-top: 20px; font-size: 13.400px; line-height: 20px; color: #42526e; }
.crumbs i { width: 25px; text-align: center; }
.crumbs a, .actions a { color: #2b64cf; }
h1 { margin: 0; font-size: 28.700px; font-weight: 400; line-height: 37px; color: #172b4d; -webkit-text-stroke: .7px; }
.actions { display: flex; align-items: center; justify-content: flex-end; padding: 27px 20px 0 0; font-size: 13.500px; line-height: 30px; color: #42526e; }
.save { width: 52px; margin: 0 5px 0 6px; }
.newv, .ver { background: #e1e2e6; text-align: center; border-radius: 3px 0 0 3px; }
.newv { width: 100px; margin-right: 2px; }
.ver { width: 51px; display: flex; align-items: center; justify-content: center; gap: 4px; }
.c-tabs { grid-column: 1 / 4; display: flex; gap: 20.300px; font-size: 13.300px; line-height: 34px; color: #505f79; }
.c-tabs .on { color: #0052cc; height: 36px; border-bottom: 2px solid #0052cc; letter-spacing: .15px; -webkit-text-stroke: .35px; }
.form { height: 364px; overflow: hidden; padding: 23px 20px 0 21px; font-size: 13.300px; color: #42526e; }
.sec { display: flex; align-items: center; height: 18px; font-weight: 700; color: #222; }
.sec svg { margin-right: 4px; color: #555; }
.sec hr { flex: 1; border: 0; height: 2px; background: #ebebeb; margin: 2px 0 0 10px; }
.sec-name hr { margin-left: 5px; }
.sec sup { color: #e5493a; font-size: 10px; font-weight: 400; align-self: flex-start; line-height: 8px; }
.form p { margin: 8px 0 22.300px 9px; line-height: 28px; font-size: 13.600px; }
.form .strong { font-weight: 700; color: #172b4d; font-size: 13.200px; }
.fields { display: grid; grid-template-columns: 213px 192px 192px 192px 120px; padding-left: 3px; margin-top: 4px; }
.fields > div { height: 51px; }
.fields label { display: flex; gap: 5px; line-height: 25px; height: 25px; color: #7a869a; }
.fields label svg { margin-top: 3px; }
.val { display: flex; align-items: center; gap: 7px; line-height: 25px; padding-left: 11px; }
.val svg { color: #253858; }
.val-p { padding-left: 13px; }
.val-p .flag { margin: -3px 4px 0 0; }
.hh { font-style: italic; padding-left: 5px; }
.fab { position: absolute; right: 11px; top: 405px; filter: drop-shadow(0 3px 4px rgba(9, 30, 66, .25)); }
.main-scroll { width: 9px; background: #f1f1f1; overflow: hidden; display: flex; flex-direction: column; align-items: flex-end; padding-top: 7px; }
.main-scroll .thumb { width: 7px; height: 373px; margin: 4px 0 84px; background: #c1c1c1; flex: none; }
.main-scroll .tri { margin-right: -5px; flex: none; }
.main-scroll .tri.up { border-bottom-color: #aaa; }
.strip { position: relative; height: 12px; border-top: 2px solid #b0b0b0; background: linear-gradient(90deg, #d8d8d8 410px, #efe3da 500px, #e8e2e2 580px, #f6e4d6 700px, #f6e4d6 760px, #d8d8d8 830px); }
.strip-pill { position: absolute; left: 62px; top: 8px; width: 194px; height: 20px; border-radius: 12px; background: #f3f3f3; }
.strip-tile { position: absolute; left: 441px; top: 4px; width: 36px; height: 12px; background: radial-gradient(circle at 27px 9px, #0a84cc 7px, #f8f0ea 7.500px); }

/* Word status bar */
.status { height: 33px; flex: none; background: #f3f3f3; border-top: 1px solid #c6c6c6; display: flex; align-items: center; font-size: 14.800px; color: #444; }
.st-page { width: 105px; margin-left: 11px; }
.st-words { width: 100px; }
.st-lang { width: 184px; margin-left: 25px; }
.st-acc { flex: 1; margin-left: 3px; }
.views { display: flex; align-items: center; height: 32px; gap: 20px; margin-right: 24px; }
.view-on { width: 60px; height: 32px; display: grid; place-items: center; background: #c6c6c6; }
.st-pct { width: 42px; margin-left: 18px; }

/* Windows taskbar */
.taskbar { position: relative; height: 72px; flex: none; border-top: 2px solid #b3b1ad; background: linear-gradient(90deg, #d9d9d9 590px, #e9e1dc 660px, #f4e5d9 760px, #e9e3e4 900px, #f4e5d9 1010px, #f4e5d9 1250px, #d9d9d9 1340px); display: flex; align-items: center; padding: 0 0 2px 31px; }
.t-start { margin-right: 21px; }
.t-search { width: 328px; height: 47px; margin-right: 19px; border: 1px solid #c4c4c4; border-bottom-width: 2px; border-radius: 24px; background: #f4f4f4; display: flex; align-items: center; padding: 0 6px 0 15px; font-size: 19.800px; color: #666; }
.t-search span { margin-left: 14px; }
.t-art { margin-left: auto; }
.t-icon { width: 36px; height: 36px; margin-right: 30px; flex: none; position: relative; }
.t-icon svg { width: 36px; height: 36px; position: relative; }
.t-active::before { content: ""; position: absolute; inset: -10px; border: 1px solid #e6dbd2; border-radius: 6px; background: #fbf3ee; }
.badge { position: absolute; left: 20px; top: -8px; width: 24px; height: 24px; border-radius: 50%; background: #0a84cc; color: #fff; font-size: 13px; line-height: 22px; text-align: center; }
.dell { font: 700 11.500px "Open Sans", sans-serif; }
.app { font: 700 15px "Open Sans", sans-serif; fill: #fff; text-anchor: middle; }
.tray { margin-left: auto; display: flex; align-items: center; padding-right: 28px; }
.tr-wifi { margin-left: 27px; }
.tr-vol { margin-left: 12px; }
.tr-bat { margin-left: 12px; }
.clock { width: 101px; text-align: right; font-size: 17.500px; line-height: 24px; color: #222; }
.dots { position: absolute; left: 500px; bottom: 7px; display: grid; grid-template-columns: repeat(10, 36px); column-gap: 30px; }
.dots i { width: 9px; height: 5px; border-radius: 3px; background: #858380; justify-self: center; }
.dots i:nth-child(2) { grid-column: 4; }
.dots i:nth-child(3) { grid-column: 7; }
.dots i:nth-child(4) { grid-column: 8; }
.dots i:nth-child(5) { grid-column: 9; }
.dots i:nth-child(6) { grid-column: 10; }
.dots .wide { width: 24px; background: #267f8e; }
```
